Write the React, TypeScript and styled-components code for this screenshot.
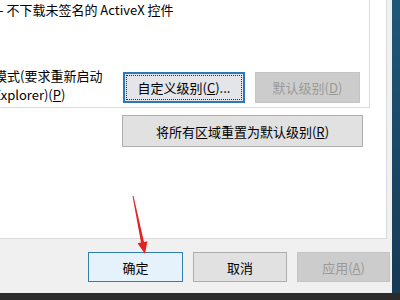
import React from "react";
import styled, { createGlobalStyle, css } from "styled-components";

const GlobalStyle = createGlobalStyle`
  html, body {
    margin: 0;
    padding: 0;
    background: #2b2b2b;
  }
`;

type Variant = "normal" | "primary" | "focused" | "disabled";

const Screen = styled.div`
  position: relative;
  width: 400px;
  height: 300px;
  overflow: hidden;
  display: flex;
  flex-direction: column;
  font-family: "Noto Sans CJK SC", "Noto Sans", sans-serif;
  font-size: 13px;
  color: #000;
`;

const Workspace = styled.div`
  display: flex;
  height: 293px;
`;

const Dialog = styled.div`
  width: 392px;
  background: #f0f0f0;
  display: flex;
  flex-direction: column;
`;

const Desktop = styled.div`
  flex: 1;
  background: linear-gradient(180deg, #1f5878 0%, #1a4563 60%, #173a55 100%);
`;

const Taskbar = styled.div`
  flex: 1;
  background: #2b2b2b;
`;

const TabPage = styled.div`
  width: 386px;
  height: 238px;
  background: #fff;
  border-right: 1px solid #d9d9d9;
  border-bottom: 1px solid #d9d9d9;
  overflow: hidden;
`;

const GroupBox = styled.div`
  width: 369px;
  height: 107px;
  border-right: 1px solid #dcdcdc;
  border-bottom: 1px solid #dcdcdc;
`;

const Description = styled.div`
  line-height: 20px;
  margin-left: -1px;
  white-space: nowrap;
`;

const ProtectRow = styled.div`
  display: flex;
  align-items: flex-start;
  margin-top: 46px;
`;

const ProtectLabel = styled.label`
  flex: 0 0 auto;
  width: 181px;
  margin-left: -58px;
  line-height: 19px;
  white-space: nowrap;
`;

const LevelButtons = styled.div`
  display: flex;
  gap: 10px;
  margin-top: 6px;
`;

const ResetRow = styled.div`
  margin-top: 7px;
  padding-left: 122px;
`;

const ButtonBar = styled.div`
  display: flex;
  justify-content: flex-end;
  gap: 10px;
  padding: 13px 2px 0 0;
`;

const Button = styled.button<{ $w: number; $h?: number; $variant?: Variant }>`
  box-sizing: border-box;
  width: ${(p) => p.$w}px;
  height: ${(p) => p.$h ?? 30}px;
  padding: 0;
  font: inherit;
  font-size: 13px;
  color: #000;
  background: #e1e1e1;
  border: 1px solid #adadad;
  display: flex;
  align-items: center;
  justify-content: center;

  ${(p) =>
    p.$variant === "primary" &&
    css`
      background: #e5f1fb;
      border-color: #2f7fb5;
    `}

  ${(p) =>
    p.$variant === "focused" &&
    css`
      background: #e3e5e8;
      border: 2px solid #2f78b8;
      outline: 1px dotted #333;
      outline-offset: -4px;
    `}

  ${(p) =>
    p.$variant === "disabled" &&
    css`
      background: #cccccc;
      border-color: #c4c4c4;
      color: #9a9a9a;
    `}
`;

const Arrow = styled.svg`
  position: absolute;
  left: 0;
  top: 0;
  pointer-events: none;
`;

export default function App() {
  return (
    <Screen>
      <GlobalStyle />
      <Workspace>
        <Dialog>
          <TabPage>
            <GroupBox>
              <Description>- 不下载未签名的 ActiveX 控件</Description>
              <ProtectRow>
                <ProtectLabel>
                  启用保护模式(要求重新启动
                  <br />
                  Internet Explorer)(<u>P</u>)
                </ProtectLabel>
                <LevelButtons>
                  <Button $w={122} $h={31} $variant="focused">
                    自定义级别(<u>C</u>)...
                  </Button>
                  <Button $w={105} $h={31} $variant="disabled">
                    默认级别(<u>D</u>)
                  </Button>
                </LevelButtons>
              </ProtectRow>
            </GroupBox>
            <ResetRow>
              <Button $w={241} $h={32}>
                将所有区域重置为默认级别(<u>R</u>)
              </Button>
            </ResetRow>
          </TabPage>
          <ButtonBar>
            <Button $w={95} $variant="primary">
              确定
            </Button>
            <Button $w={94}>取消</Button>
            <Button $w={93} $variant="disabled">
              应用(<u>A</u>)
            </Button>
          </ButtonBar>
        </Dialog>
        <Desktop />
      </Workspace>
      <Taskbar />
      <Arrow width="400" height="300" viewBox="0 0 400 300">
        <polygon
          points="132.5,196 133.5,196 144,242 147.4,241.3 145,254 137.6,243.3 141,242.6"
          fill="#e32222"
        />
      </Arrow>
    </Screen>
  );
}
